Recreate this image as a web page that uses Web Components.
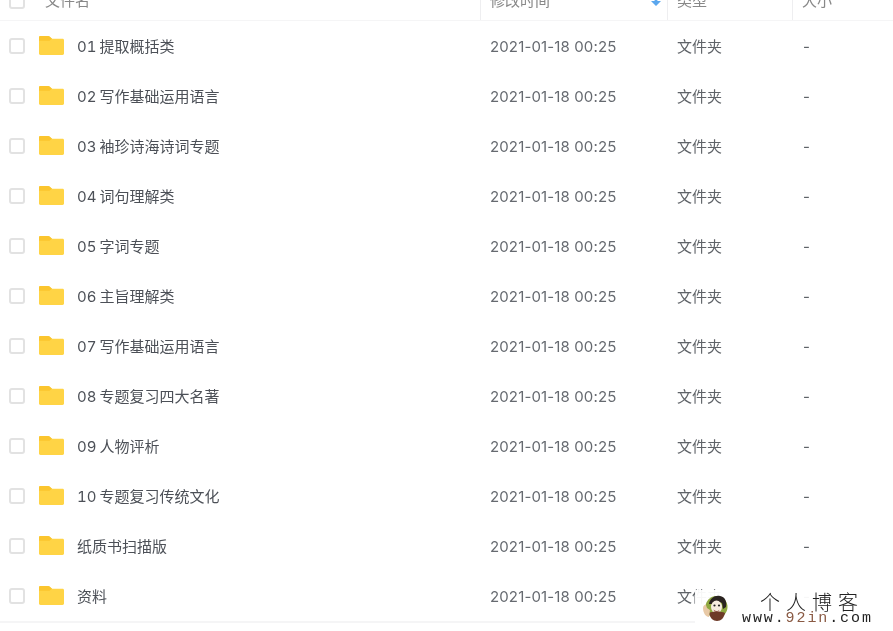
<!DOCTYPE html>
<html>
<head>
<meta charset="utf-8">
<style>
    html, body { margin: 0; height: 100%; overflow: hidden; background: #fff; }
    body { font-family: Inter, "Noto Sans CJK SC", sans-serif; }
</style>
</head>
<body>
<file-table></file-table>
<site-mark></site-mark>

<script>
const COLS = 'grid-template-columns: 480px 187px 125px 101px;';

class FileHeader extends HTMLElement {
    constructor() {
        super();
        this.attachShadow({ mode: 'open' }).innerHTML = `
            <style>
                :host { display: grid; ${COLS} height: 20px; overflow: hidden; align-items: end;
                    border-bottom: 1px solid #f5f5f6; color: #888; font-size: 15px; filter: blur(.3px); }
                .c { height: 20px; position: relative; box-sizing: border-box; display: flex; align-items: center; }
                .c + .c { border-left: 1px solid #eeeef0; padding-left: 9px; }
                span { line-height: 20px; margin-top: -19px; white-space: nowrap; }
                .box { width: 12px; height: 12px; border: 2px solid #e2e2e2; border-radius: 3px; margin: -19px 0 0 9px; flex: none; }
                .name { margin-left: 20px; }
                svg { position: absolute; left: 169px; top: -2px; }
            </style>
            <div class="c"><div class="box"></div><span class="name">文件名</span></div>
            <div class="c"><span>修改时间</span>
                <svg width="12" height="8" viewBox="0 0 12 8"><path d="M4.6 0h2.8v3H11L6 8 1 3h3.6z" fill="#5ba7ee"/></svg>
            </div>
            <div class="c"><span>类型</span></div>
            <div class="c"><span>大小</span></div>
        `;
    }
}

class FileRow extends HTMLElement {
    constructor() {
        super();
        this.attachShadow({ mode: 'open' }).innerHTML = `
            <style>
                :host { display: grid; ${COLS} height: 50px; align-items: center; color: #5f6368; font-size: 15px;
                    line-height: 20px; filter: blur(.3px); }
                .first { display: flex; align-items: center; }
                .box { width: 12px; height: 12px; border: 2px solid #e2e2e2; border-radius: 3px; margin-left: 9px; flex: none; }
                svg { margin: -2px 0 0 14px; flex: none; }
                .name { margin-left: 13px; padding-top: 2px; color: #4c5057; white-space: nowrap; word-spacing: -1px;
                    font-variant-numeric: tabular-nums; }
                .date { padding: 2px 0 0 10px; white-space: nowrap; color: #666a70; letter-spacing: .13px; }
                .type { padding: 2px 0 0 10px; white-space: nowrap; }
                .size { padding: 2px 0 0 11px; }
            </style>
            <div class="first">
                <div class="box"></div>
                <svg width="25" height="19" viewBox="0 0 25 20" preserveAspectRatio="none">
                    <path d="M1.5 0H9c.8 0 1.3.3 1.8.8L13 3h10.500c.9 0 1.500.6 1.500 1.500v14c0 .9-.6 1.500-1.500 1.500h-22C.6 20 0 19.400 0 18.500v-17C0 .6.6 0 1.500 0z" fill="#ffd445"/>
                    <path d="M0 1.500C0 .6.6 0 1.500 0H9c.8 0 1.300.3 1.800.8L13 3 10.500 5H0z" fill="#fbc52e"/>
                </svg>
                <div class="name"><slot></slot></div>
            </div>
            <div class="date">${this.getAttribute('date') || ''}</div>
            <div class="type">文件夹</div>
            <div class="size">-</div>
        `;
    }
}

class FileTable extends HTMLElement {
    constructor() {
        super();
        const names = ['01 提取概括类', '02 写作基础运用语言', '03 袖珍诗海诗词专题', '04 词句理解类', '05 字词专题',
            '06 主旨理解类', '07 写作基础运用语言', '08 专题复习四大名著', '09 人物评析', '10 专题复习传统文化',
            '纸质书扫描版', '资料'];
        this.attachShadow({ mode: 'open' }).innerHTML = `
            <style>
                :host { display: block; border-bottom: 2px solid #f5f5f6; width: 893px; }
            </style>
            <file-header></file-header>
            ${names.map(n => `<file-row date="2021-01-18 00:25">${n}</file-row>`).join('')}
        `;
    }
}

class SiteMark extends HTMLElement {
    constructor() {
        super();
        this.attachShadow({ mode: 'open' }).innerHTML = `
            <style>
                :host { position: absolute; left: 695px; top: 590px; width: 198px; height: 36px; display: flex;
                    background: rgba(255,255,255,.95); color: #222; filter: blur(.3px); }
                svg { margin: 5px 0 0 8px; flex: none; }
                .t { margin-left: 14px; display: flex; flex-direction: column; align-items: flex-start; }
                .cn { font: 300 20px/20px "Noto Sans CJK SC", serif; letter-spacing: 6px; margin: 2px 0 0 18px; color: #222; white-space: nowrap; }
                .url { font: 15px/14px "Liberation Mono", monospace; letter-spacing: 1.900px; white-space: nowrap; color: #222; }
                .url b { font-weight: normal; color: #8a5a44; }
            </style>
            <svg width="25" height="27" viewBox="0 0 25 27">
                <circle cx="13.500" cy="12" r="11" fill="#8fa83f"/>
                <path d="M6 9c1-6 6-9 11-8 5 1 7 5 6 11l-3 2-1-6-6-2-4 3z" fill="#2a2320"/>
                <ellipse cx="13.500" cy="12" rx="5.500" ry="6.500" fill="#f6ecdf"/>
                <circle cx="11.500" cy="10.500" r="1.100" fill="#222"/>
                <circle cx="16" cy="10.500" r="1.100" fill="#222"/>
                <path d="M10.500 14.500c2 2 4.500 2 6 0-.8 3-5 3-6 0z" fill="#8c2f24"/>
                <path d="M6 18c4-2 12-2 16 0-1 5-4 8-8 8s-7-3-8-8z" fill="#6e3a28"/>
                <path d="M0 13c0-2 2-4 3-3l1 3 3 2-1 7c-3 0-6-4-6-9z" fill="#e8c9a6"/>
            </svg>
            <div class="t">
                <div class="cn">个人博客</div>
                <div class="url">www.<b>92in</b>.com</div>
            </div>
        `;
    }
}

customElements.define('file-header', FileHeader);
customElements.define('file-row', FileRow);
customElements.define('file-table', FileTable);
customElements.define('site-mark', SiteMark);
</script>
</body>
</html>
